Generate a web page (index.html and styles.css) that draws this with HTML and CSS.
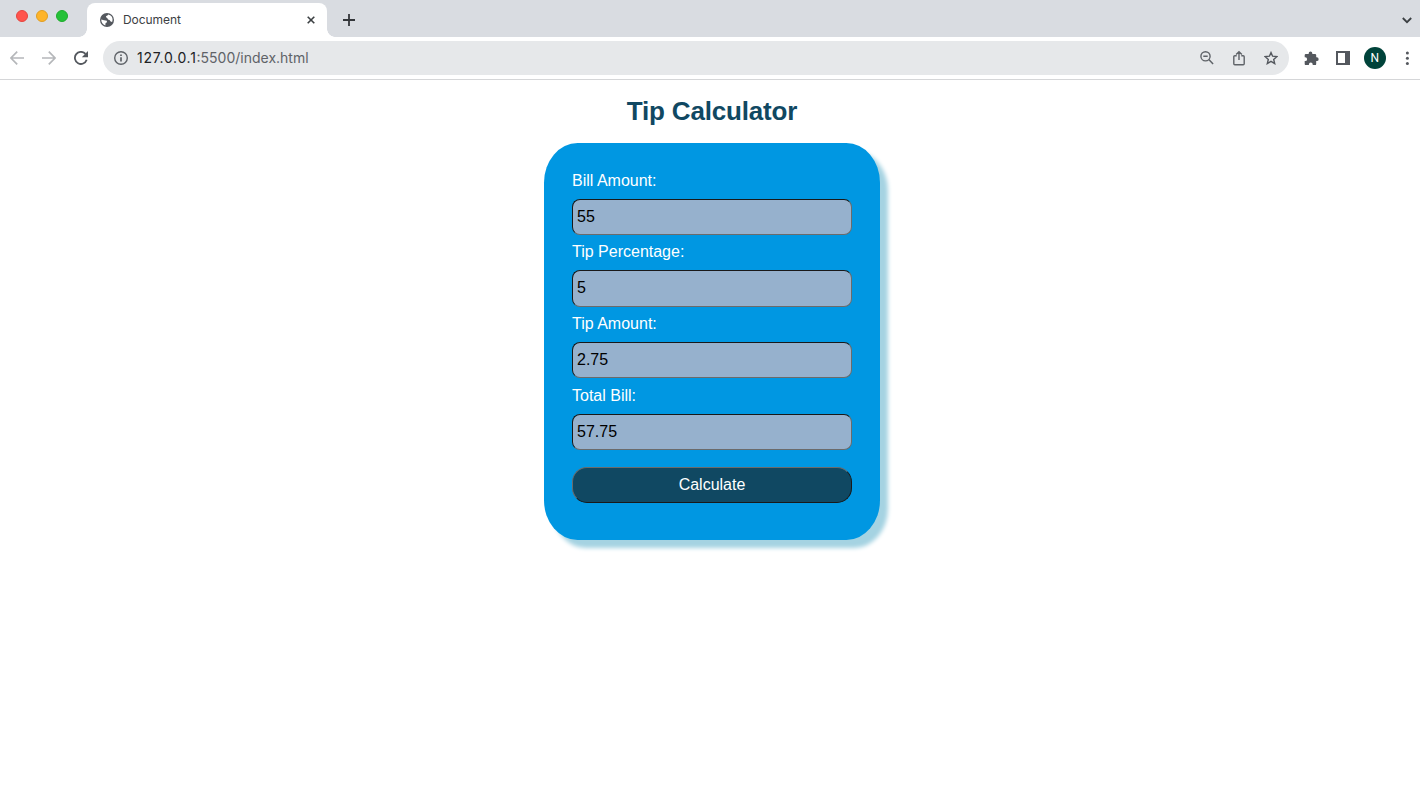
FILE: index.html
```html
<!DOCTYPE html>
<html lang="en">
<head>
<meta charset="utf-8">
<title>Document</title>
<link rel="stylesheet" href="styles.css">
</head>
<body>
<header class="browser">
  <div class="tabs">
    <div class="lights"><i class="red"></i><i class="yellow"></i><i class="green"></i></div>
    <div class="tab">
      <svg class="globe" width="14" height="14" viewBox="0 0 14 14"><circle cx="7" cy="7" r="7" fill="#54585e"/><path d="M1.2 6.5 4 7.2 6.8 7.8 7 9.3 5.6 10 5.3 12.4C2.8 11.7 1.2 9.5 1.2 6.5ZM8.2 1.4C7.8 2.8 6.2 2.3 5.9 3.8 6 5 7.4 4.3 7.6 5.7 7.9 7 9.6 6.3 10 7.5 10.2 8.4 11 8.7 12.1 8.9 13.6 5.6 11.9 2.2 8.2 1.4Z" fill="#fff"/></svg>
      <span class="title">Document</span>
      <svg class="close" width="8" height="8" viewBox="0 0 8 8"><path d="M.7.7 7.3 7.3M7.3.7.7 7.3" stroke="#3c4043" stroke-width="1.6"/></svg>
    </div>
    <svg class="plus" width="12" height="12" viewBox="0 0 12 12"><path d="M6 0V12M0 6H12" stroke="#33363a" stroke-width="1.8"/></svg>
    <svg class="chevron" width="10" height="7" viewBox="0 0 10 7"><path d="M.8 1 5 5.2 9.2 1" fill="none" stroke="#3c4043" stroke-width="1.8"/></svg>
  </div>
  <div class="toolbar">
    <nav class="nav">
      <svg width="14" height="14" viewBox="0 0 14 14"><path d="M14 7H1M7.2.7.9 7l6.3 6.3" fill="none" stroke="#b5b7ba" stroke-width="1.7"/></svg>
      <svg width="14" height="14" viewBox="0 0 14 14"><path d="M0 7H13M6.8.7 13.1 7l-6.3 6.3" fill="none" stroke="#b5b7ba" stroke-width="1.7"/></svg>
      <svg width="14" height="14" viewBox="0 0 14 14"><path d="M12.7 8.8A6.05 6.05 0 1 1 11.5 2.9" fill="none" stroke="#54585e" stroke-width="1.8"/><path d="M14 0V6.2H7.8Z" fill="#54585e"/></svg>
    </nav>
    <div class="address">
      <svg width="14" height="14" viewBox="0 0 14 14"><circle cx="7" cy="7" r="6.3" fill="none" stroke="#5f6368" stroke-width="1.4"/><path d="M7 6.2V10.5M7 3.4V5" stroke="#54585e" stroke-width="1.6"/></svg>
      <span class="url"><b>127.0.0.1</b>:5500/index.html</span>
      <div class="actions">
        <svg width="14" height="14" viewBox="0 0 14 14"><circle cx="5.5" cy="5.3" r="4.6" fill="none" stroke="#5f6368" stroke-width="1.4"/><path d="M8.8 8.6 13.1 13M3.3 5.3H7.7" stroke="#5f6368" stroke-width="1.5"/></svg>
        <svg width="14" height="16" viewBox="0 0 14 16"><path d="M4.7 5.7H2.8Q1.8 5.7 1.8 6.7V13.7Q1.8 14.7 2.8 14.7H11.2Q12.2 14.7 12.2 13.7V6.7Q12.2 5.7 11.2 5.7H9.3M7 10V1.8M4.1 4.6 7 1.7 9.9 4.6" fill="none" stroke="#5f6368" stroke-width="1.4"/></svg>
        <svg width="14" height="14" viewBox="0 0 14 14"><path d="M7 1.6 8.6 5.2 12.9 5.6 9.7 8.4 10.7 12.6 7 10.4 3.3 12.6 4.3 8.4 1.1 5.6 5.4 5.2Z" fill="none" stroke="#54585e" stroke-width="1.4"/></svg>
      </div>
    </div>
    <div class="tools">
      <svg width="15" height="15" viewBox="0 0 15 15"><path d="M4.7 2.2a1.8 1.8 0 0 1 3.6 0V2.9H11Q12.2 2.9 12.2 4.1V6.3H12.8A1.85 1.85 0 0 1 12.8 10H12.2V12.9Q12.2 14.1 11 14.1H8.7V13.4A1.9 1.9 0 0 0 4.9 13.4V14.1H1.9Q.7 14.1.7 12.9V10.1H1.2A1.9 1.9 0 0 0 1.2 6.3H.7V4.1Q.7 2.9 1.9 2.9H4.7Z" fill="#54585e"/></svg>
      <svg width="14" height="14" viewBox="0 0 14 14"><path fill-rule="evenodd" d="M0 0H14V14H0ZM2 2V12H9V2Z" fill="#54585e"/></svg>
      <span class="avatar">N</span>
      <svg width="4" height="14" viewBox="0 0 4 14"><g fill="#54585e"><circle cx="2.4" cy="2" r="1.5"/><circle cx="2.4" cy="7.3" r="1.5"/><circle cx="2.4" cy="12.5" r="1.5"/></g></svg>
    </div>
  </div>
</header>
<main class="page">
  <h1>Tip Calculator</h1>
  <form class="card">
    <label for="bill">Bill Amount:</label><input id="bill" type="text" value="55">
    <label for="percent">Tip Percentage:</label><input id="percent" type="text" value="5">
    <label for="tip">Tip Amount:</label><input id="tip" type="text" value="2.75">
    <label for="total">Total Bill:</label><input id="total" type="text" value="57.75">
    <button type="button">Calculate</button>
  </form>
</main>
</body>
</html>
```
FILE: styles.css
```css
* { box-sizing: border-box; }
body { margin: 0; height: 810px; overflow: hidden; background: #fff; font-family: "Liberation Sans", Arial, sans-serif; }
svg { display: block; flex: none; }
.tabs { display: flex; height: 37px; background: #d9dce1; }
.lights { display: flex; gap: 8px; padding: 10.4px 0 0 16px; width: 87px; flex: none; }
.lights i { width: 12px; height: 12px; border-radius: 50%; border: 1px solid; }
.lights .red { background: #ff544d; border-color: #e5453f; }
.lights .yellow { background: #feb429; border-color: #e09e22; }
.lights .green { background: #25c138; border-color: #1dac2c; }
.tab { position: relative; display: flex; align-items: center; width: 240px; height: 34px; margin-top: 3px; padding: 0 12px 0 13px; border-radius: 8px 8px 0 0; background: #fff; font: 12px/16px Inter, sans-serif; color: #3c4043; letter-spacing: -.05px; }
.tab::before, .tab::after { content: ""; position: absolute; bottom: 0; width: 8px; height: 8px; }
.tab::before { left: -8px; background: radial-gradient(circle at 0 0, transparent 7.5px, #fff 8px); }
.tab::after { right: -8px; background: radial-gradient(circle at 100% 0, transparent 7.5px, #fff 8px); }
.title { margin-left: 9px; }
.close { margin-left: auto; }
.plus { margin: 14px 0 0 16px; }
.chevron { margin: 17px 8px 0 auto; }
.toolbar { display: flex; align-items: center; height: 43px; padding: 0 10px; border-bottom: 1px solid #d5d6d8; background: #fff; }
.nav { display: flex; gap: 18px; width: 93px; flex: none; }
.address { display: flex; align-items: center; width: 1186px; height: 34px; padding: 0 11px; border-radius: 17px; background: #e6e8ea; }
.url { margin-left: 9px; font: 14px/20px Inter, sans-serif; color: #5f6368; }
.url b { font-weight: 400; letter-spacing: .7px; color: #202124; }
.actions { display: flex; align-items: center; gap: 18px; margin-left: auto; }
.tools { display: flex; align-items: center; margin-left: 14.5px; gap: 17.2px; }
.avatar { display: grid; place-items: center; width: 22px; height: 22px; margin-left: -3px; border-radius: 50%; background: #00433a; color: #fff; font: 12px/14px Roboto, sans-serif; }
.tools .avatar + svg { margin-left: 2px; }
.page { display: flex; flex-direction: column; align-items: center; padding-left: 4px; }
h1 { margin: 16px 0 17px; font-size: 26px; line-height: 30px; letter-spacing: -.18px; color: #104862; }
.card { display: flex; flex-direction: column; width: 336px; height: 397px; padding: 20.23px 28px 0; border-radius: 10%; background: #0097e2; box-shadow: 8px 8px 4px #a5d3e2; color: #fff; font-size: 16px; }
label { height: 35.57px; padding-top: 7.5px; line-height: 19px; }
input { height: 36.1px; margin: 0; padding: 0 4px; border: 1px solid; border-color: #191919 #6b6b6b #6b6b6b #191919; border-radius: 8px; background: #96b1cd; color: #000; font: 16px "Liberation Sans", Arial, sans-serif; }
button { height: 36px; margin-top: 17.6px; padding: 0 0 1px; border: 1px solid; border-color: #6b6b6b #191919 #191919 #6b6b6b; border-radius: 15px; background: #104862; color: #fff; font: 16px "Liberation Sans", Arial, sans-serif; }
```
